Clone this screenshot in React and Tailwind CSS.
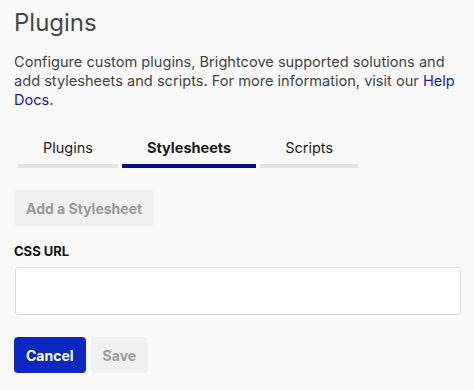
import React, { useState } from 'react'

function App() {
  const [tab, setTab] = useState("Stylesheets");

  return (
    <div
      className="min-h-screen w-full bg-[#f9f9f9] px-[14px] pt-[6px]"
      style={{ fontFamily: "Inter, 'Liberation Sans', sans-serif" }}
    >
      {/* Header */}
      <h1 className="text-[24px] leading-[34px] text-[#474747] font-normal">Plugins</h1>
      <p className="mt-[13px] text-[14.6px] leading-[19px] text-[#444]">
        Configure custom plugins, Brightcove supported solutions and add stylesheets and scripts. For more information, visit our{" "}
        <a href="#" className="text-[#1b1b9e]">Help Docs</a>.
      </p>

      {/* Tabs */}
      <div className="mt-[27px] ml-1 flex gap-1">
        {["Plugins", "Stylesheets", "Scripts"].map((label) => (
          <button
            key={label}
            onClick={() => setTab(label)}
            className={`px-[25px] pb-[5px] text-[14.5px] leading-[22px] border-b-4 ${
              tab === label
                ? 'font-bold text-[#1a1a1a] border-[#0a0a8c]'
                : 'text-[#222] border-[#e4e4e4]'
            }`}
          >
            {label}
          </button>
        ))}
      </div>

      {/* Add */}
      <button className="mt-[22px] h-9 px-[12px] rounded-sm bg-[#f0f0f0] text-[#9a9a9a] text-[14px] font-bold">
        Add a Stylesheet
      </button>

      {/* Field */}
      <label className="block mt-[16px] text-[13px] leading-[18px] font-bold text-[#111]">CSS URL</label>
      <input
        type="text"
        className="block mt-[7px] w-[446px] ml-px h-[48px] bg-white border border-[#dedede] rounded-[3px] px-3 outline-none"
      />

      {/* Actions */}
      <div className="mt-[22px] flex gap-[5px]">
        <button className="h-9 px-[12px] rounded-sm bg-[#0b29c0] text-white text-[14px] font-bold">Cancel</button>
        <button className="h-9 px-[12px] rounded-sm bg-[#f0f0f0] text-[#9a9a9a] text-[14px] font-bold">Save</button>
      </div>
    </div>
  )
}

export default App;
